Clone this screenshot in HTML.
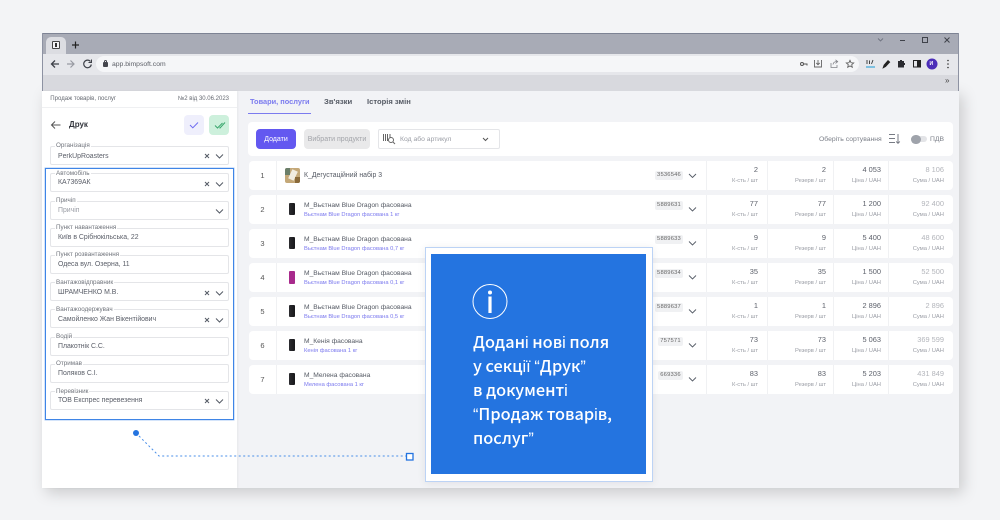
<!DOCTYPE html>
<html lang="uk"><head><meta charset="utf-8"><title>BimpSoft</title>
<style>
html,body{margin:0;padding:0}
body{width:1000px;height:520px;position:relative;overflow:hidden;background:#f3f4f6;font-family:"Liberation Sans",sans-serif;color:#4b4f5a}
div,span,svg{position:absolute;box-sizing:border-box}
.t{white-space:nowrap;line-height:10px;height:10px;filter:blur(.25px)}
.fld{left:50px;width:179px;height:19px;border:1px solid #e4e5e8;border-radius:2px;background:#fff}
.lbl{left:55px;font-size:6.3px;color:#70747c;background:#fff;padding:0 1px;white-space:nowrap;line-height:7px;height:7px;filter:blur(.25px)}
.val{left:58px;font-size:6.9px;color:#5a5e68;white-space:nowrap;line-height:10px;height:10px;filter:blur(.25px)}
.row{left:249px;width:704px;height:29px;background:#fff;border-radius:4px}
.dv{top:0;width:1px;height:29px;background:#f0f1f3}
.n{left:0;width:27px;top:9.500px;text-align:center;font-size:7.500px;color:#555;line-height:10px;filter:blur(.25px)}
.name{left:55px;top:6px;font-size:6.700px;color:#555a64;white-space:nowrap;line-height:9px;filter:blur(.25px)}
.sub{left:55px;top:15.500px;font-size:5.750px;color:#7a78ee;white-space:nowrap;line-height:8px;filter:blur(.25px)}
.chip{left:406px;top:6px;height:9px;width:28px;background:#f0f1f3;border-radius:2px;font-size:5.800px;color:#666;text-align:center;line-height:9.500px;letter-spacing:.2px;filter:blur(.2px)}
.v{text-align:right;width:60px;font-size:7.400px;color:#5d616b;top:4px;line-height:9px;filter:blur(.25px)}
.c{text-align:right;width:60px;font-size:5.800px;color:#9a9da5;top:16px;line-height:8px;filter:blur(.25px)}
.g{color:#b3b5bb}
.bag{left:40px;top:8px;width:6px;height:12px;background:linear-gradient(90deg,#2c2c30,#17171a);border-radius:1px}
.pop{font-family:"Noto Sans CJK SC","Liberation Sans",sans-serif;font-size:16.300px;font-weight:500;color:#fff;left:473px;white-space:nowrap;line-height:24px;height:24px}
.pop i{font-family:"Liberation Sans",sans-serif;font-style:normal}
</style></head><body>
<!-- window -->
<div style="left:42px;top:90px;width:917px;height:398px;background:#f2f3f6;box-shadow:4px 5px 14px rgba(0,0,0,.17)"></div>
<div style="left:42px;top:33px;width:917px;height:21px;background:#a8abb6;border-top:1px solid #7d8394"></div>
<div style="left:42px;top:54px;width:917px;height:21px;background:#e6e7eb"></div>
<div style="left:42px;top:75px;width:917px;height:16px;background:#d8d9de"></div>
<div style="left:958px;top:33px;width:1px;height:58px;background:#8d92a2"></div>
<div style="left:42px;top:33px;width:1px;height:58px;background:#8d92a2"></div>
<div style="left:46px;top:37px;width:20px;height:17px;background:#dcdde2;border-radius:5px 5px 0 0"></div>
<div style="left:52px;top:41px;width:8px;height:8px;background:#f4f4f6;border:1px solid #444;border-radius:1px"></div>
<div style="left:55px;top:43px;width:2px;height:4px;background:#333"></div>
<div style="left:96px;top:56px;width:763px;height:16px;background:#f5f6f8;border-radius:8px"></div>
<svg style="left:42px;top:33px" width="917" height="58" viewBox="42 33 917 58" fill="none" stroke="#3f424a" stroke-width="1.100">
<path d="M72 45h7M75.500 41.500v7" stroke="#222" stroke-width="1.200"/>
<path d="M59 64h-7M55 60.500L51.500 64l3.500 3.500" stroke-width="1.300"/>
<path d="M67 64h7M70.500 60.500L74 64l-3.500 3.500" stroke="#989aa2" stroke-width="1.200"/>
<path d="M90.500 61.500a3.800 3.800 0 1 0 .8 3" stroke-width="1.200"/><path d="M91.500 59.500v3h-3" stroke-width="1"/>
<path d="M878 38.500l2.500 2.500 2.500-2.500" stroke="#6f7380" stroke-width=".9"/>
<path d="M900 40.500h5" stroke-width="1"/>
<rect x="922.500" y="37.500" width="5" height="5" stroke-width="1"/>
<path d="M944.500 37.500l5 5M949.500 37.500l-5 5" stroke-width="1"/>
<path d="M800.500 64a1.500 1.500 0 1 0 3 0a1.500 1.500 0 1 0-3 0M803.500 64h3.500v1.500" stroke="#555" stroke-width="1"/>
<path d="M815 60.500h-.5v6.500h7v-6.500h-.5M818 60v4.500M816.300 63l1.700 1.700 1.700-1.700" stroke="#666" stroke-width=".9"/>
<path d="M831 63v4.500h6V65M833 64.500c.3-2 1.700-3 4-3M835.500 59.800l2.200 1.800-2.200 1.800" stroke="#808288" stroke-width=".8"/>
<path d="M850 60.300l1.100 2.500 2.600.2-2 1.700.6 2.600-2.300-1.400-2.300 1.400.6-2.600-2-1.700 2.600-.2z" stroke="#555" stroke-width=".8"/>
<path d="M867 60v4M869.500 60.500v3.500M873 60l-1.500 4" stroke="#333" stroke-width=".9"/><path d="M866 67h9" stroke="#2a9fd6" stroke-width="1.100"/>
<path d="M883 68l1-3 4-4.500 1.800 1.600-4.200 4.500z" fill="#222" stroke="#222" stroke-width=".7"/>
<path d="M898 61h2v-1h2v1h2v2h1v2h-1v2.500h-6z" fill="#2a2b30" stroke="none"/>
<rect x="913.500" y="60.500" width="7" height="6.500" stroke="#222" stroke-width="1"/><rect x="917" y="60.500" width="3.500" height="6.500" fill="#222" stroke="none"/>
<circle cx="932" cy="64" r="5.500" fill="#4b2db8" stroke="none"/>
<circle cx="948" cy="60.500" r=".8" fill="#333" stroke="none"/><circle cx="948" cy="64" r=".8" fill="#333" stroke="none"/><circle cx="948" cy="67.500" r=".8" fill="#333" stroke="none"/>
</svg>
<div style="left:103px;top:62px;width:4.500px;height:4.500px;background:#44464d;border-radius:1px"></div>
<div style="left:104px;top:60px;width:2.500px;height:3px;border:1px solid #44464d;border-bottom:0;border-radius:2px 2px 0 0"></div>
<div class="t" style="left:112px;top:59.500px;font-size:6.800px;color:#5b5e66">app.bimpsoft.com</div>
<div class="t" style="left:929.500px;top:59px;font-size:5px;color:#fff;font-weight:bold">И</div>
<div class="t" style="left:945px;top:76px;font-size:8px;color:#444">»</div>

<!-- left panel -->
<div style="left:42px;top:91px;width:195px;height:397px;background:#fff;box-shadow:1px 0 2px rgba(0,0,0,.05)"></div>
<div style="left:42px;top:107px;width:195px;height:1px;background:#eff0f2"></div>
<div class="t" style="left:50px;top:94px;font-size:6.050px;color:#666a72;padding-left:.3px;filter:none">Продаж товарів, послуг</div>
<div class="t" style="right:771px;top:94px;font-size:6px;color:#666a72">№2 від 30.06.2023</div>
<svg style="left:50px;top:119px" width="12" height="12" viewBox="0 0 12 12" fill="none" stroke="#555" stroke-width="1"><path d="M10.500 6H1.500M5 2.500L1.500 6 5 9.500"/></svg>
<div class="t" style="left:69px;top:120px;font-size:8px;font-weight:bold;color:#33363d">Друк</div>
<div style="left:184px;top:115px;width:20px;height:20px;background:#efeffc;border-radius:4px"></div>
<div style="left:209px;top:115px;width:20px;height:20px;background:#cdf0dc;border-radius:4px"></div>
<svg style="left:184px;top:115px" width="46" height="20" viewBox="0 0 46 20" fill="none"><path d="M6 10l2.800 2.800L14 7.500" stroke="#6f6cf0"/><path d="M31 10.500l2.500 2.500 5-5M35.500 12.500l.5.500 5-5.500" stroke="#3aa76d"/></svg>

<div class="fld" style="top:146px"></div><div class="lbl" style="top:142px">Організація</div><div class="val" style="top:151.500px">PerkUpRoasters</div>
<div style="left:45px;top:168px;width:189px;height:252px;border:1.500px solid #3f85e6;box-shadow:0 0 0 .5px #a9c9f5"></div>
<div class="fld" style="top:173px"></div><div class="lbl" style="top:170px">Автомобіль</div><div class="val" style="top:178px">КА7369АК</div>
<div class="fld" style="top:201px"></div><div class="lbl" style="top:197px">Причіп</div><div class="val" style="top:206px;color:#9a9da5">Причіп</div>
<div class="fld" style="top:228px"></div><div class="lbl" style="top:224px">Пункт навантаження</div><div class="val" style="top:233px">Київ в Срібнокільська, 22</div>
<div class="fld" style="top:255px"></div><div class="lbl" style="top:251px">Пункт розвантаження</div><div class="val" style="top:260px">Одеса вул. Озерна, 11</div>
<div class="fld" style="top:282px"></div><div class="lbl" style="top:279px">Вантажовідправник</div><div class="val" style="top:288px">ШРАМЧЕНКО М.В.</div>
<div class="fld" style="top:309px"></div><div class="lbl" style="top:306px">Вантажоодержувач</div><div class="val" style="top:315px">Самойленко Жан Вікентійович</div>
<div class="fld" style="top:337px"></div><div class="lbl" style="top:333px">Водій</div><div class="val" style="top:342px">Плакотнік С.С.</div>
<div class="fld" style="top:364px"></div><div class="lbl" style="top:360px">Отримав</div><div class="val" style="top:369px">Поляков С.І.</div>
<div class="fld" style="top:391px"></div><div class="lbl" style="top:388px">Перевізник</div><div class="val" style="top:396px">ТОВ Експрес перевезення</div>
<svg style="left:200px;top:146px" width="30" height="270" viewBox="200 146 30 270" fill="none" stroke="#555b66" stroke-width="1">
<path d="M205 154l4 4M209 154l-4 4M216 154.500l3.500 3.500 3.500-3.500"/>
<path d="M205 182l4 4M209 182l-4 4M216 182.500l3.500 3.500 3.500-3.500"/>
<path d="M216 209.500l3.500 3.500 3.500-3.500"/>
<path d="M205 291l4 4M209 291l-4 4M216 291.500l3.500 3.500 3.500-3.500"/>
<path d="M205 318l4 4M209 318l-4 4M216 318.500l3.500 3.500 3.500-3.500"/>
<path d="M205 399l4 4M209 399l-4 4M216 399.500l3.500 3.500 3.500-3.500"/>
</svg>

<!-- right panel -->
<div class="t" style="left:250px;top:97px;font-size:7.400px;font-weight:bold;color:#7b7bef">Товари, послуги</div>
<div class="t" style="left:324px;top:97px;font-size:7.700px;font-weight:bold;color:#555a64">Зв'язки</div>
<div class="t" style="left:367px;top:97px;font-size:7.600px;font-weight:bold;color:#555a64">Історія змін</div>
<div style="left:248px;top:113px;width:63px;height:1px;background:#7b7bef"></div>
<div style="left:248px;top:122px;width:705px;height:34px;background:#fff;border-radius:4px"></div>
<div style="left:256px;top:129px;width:40px;height:20px;background:#6358f0;border-radius:4px;color:#fff;font-size:7px;text-align:center;line-height:22px">Додати</div>
<div style="left:304px;top:129px;width:66px;height:20px;background:#e9e9ea;border-radius:4px;color:#a2a4a9;font-size:7px;text-align:center;line-height:22px">Вибрати продукти</div>
<div style="left:378px;top:129px;width:122px;height:20px;background:#fff;border:1px solid #e4e5e8;border-radius:2px"></div>
<svg style="left:382px;top:132px" width="116" height="14" viewBox="382 132 116 14" fill="none" stroke="#666" stroke-width="1"><path d="M383.500 134v7M385.500 134v7M387.500 134v7M390 134v4"/><circle cx="391" cy="140" r="2.500"/><path d="M393 142l2 2"/><path d="M483 138l2.500 2.500 2.500-2.500" stroke="#555"/></svg>
<div class="t" style="left:400px;top:135px;font-size:6.800px;color:#9a9da5">Код або артикул</div>
<div class="t" style="left:819px;top:134.500px;font-size:6.800px;color:#7b7f88">Оберіть сортування</div>
<svg style="left:888px;top:133px" width="14" height="12" viewBox="0 0 14 12" fill="none" stroke="#777b84"><path d="M1 1.500h6M1 5.500h6M1 9.500h6M10 1v9M8.200 8.500l1.800 1.800 1.800-1.800"/></svg>
<div style="left:911px;top:136px;width:16px;height:6px;background:#e3e4e7;border-radius:3px"></div>
<div style="left:911px;top:134.500px;width:10px;height:9px;background:#9fa3ab;border-radius:5px"></div>
<div class="t" style="left:930px;top:134.500px;font-size:6.800px;color:#7b7f88">ПДВ</div>

<!-- rows -->
<div class="row" style="top:161px"><div class="dv" style="left:27px"></div><div class="dv" style="left:457px"></div><div class="dv" style="left:518px"></div><div class="dv" style="left:584px"></div><div class="dv" style="left:639px"></div>
<div class="n">1</div><div style="left:36px;top:7px;width:15px;height:15px;background:#c4a878;border-radius:2px;overflow:hidden"><div style="left:5px;top:2px;width:6px;height:10px;background:#f1ece0;transform:rotate(25deg)"></div><div style="left:0;top:0;width:5px;height:7px;background:#6b7f6a"></div><div style="left:10px;top:9px;width:5px;height:6px;background:#8a6a3a"></div></div>
<div class="name" style="top:9.500px;font-size:6.900px">К_Дегустаційний набір 3</div><div class="chip" style="top:10px">3536546</div>
<div class="v" style="left:449px">2</div><div class="c" style="left:449px">К-сть / шт</div><div class="v" style="left:517px">2</div><div class="c" style="left:517px">Резерв / шт</div><div class="v" style="left:572px">4 053</div><div class="c" style="left:572px">Ціна / UAH</div><div class="v g" style="left:635px">8 106</div><div class="c" style="left:635px">Сума / UAH</div></div>

<div class="row" style="top:195px"><div class="dv" style="left:27px"></div><div class="dv" style="left:457px"></div><div class="dv" style="left:518px"></div><div class="dv" style="left:584px"></div><div class="dv" style="left:639px"></div>
<div class="n">2</div><div class="bag"></div>
<div class="name">М_Вьєтнам Blue Dragon фасована</div><div class="sub">Вьєтнам Blue Dragon фасована 1 кг</div><div class="chip">5889631</div>
<div class="v" style="left:449px">77</div><div class="c" style="left:449px">К-сть / шт</div><div class="v" style="left:517px">77</div><div class="c" style="left:517px">Резерв / шт</div><div class="v" style="left:572px">1 200</div><div class="c" style="left:572px">Ціна / UAH</div><div class="v g" style="left:635px">92 400</div><div class="c" style="left:635px">Сума / UAH</div></div>

<div class="row" style="top:229px"><div class="dv" style="left:27px"></div><div class="dv" style="left:457px"></div><div class="dv" style="left:518px"></div><div class="dv" style="left:584px"></div><div class="dv" style="left:639px"></div>
<div class="n">3</div><div class="bag"></div>
<div class="name">М_Вьєтнам Blue Dragon фасована</div><div class="sub">Вьєтнам Blue Dragon фасована 0,7 кг</div><div class="chip">5889633</div>
<div class="v" style="left:449px">9</div><div class="c" style="left:449px">К-сть / шт</div><div class="v" style="left:517px">9</div><div class="c" style="left:517px">Резерв / шт</div><div class="v" style="left:572px">5 400</div><div class="c" style="left:572px">Ціна / UAH</div><div class="v g" style="left:635px">48 600</div><div class="c" style="left:635px">Сума / UAH</div></div>

<div class="row" style="top:263px"><div class="dv" style="left:27px"></div><div class="dv" style="left:457px"></div><div class="dv" style="left:518px"></div><div class="dv" style="left:584px"></div><div class="dv" style="left:639px"></div>
<div class="n">4</div><div style="left:40px;top:8px;width:6px;height:13px;background:#a82a8c;border-radius:1px"></div>
<div class="name">М_Вьєтнам Blue Dragon фасована</div><div class="sub">Вьєтнам Blue Dragon фасована 0,1 кг</div><div class="chip">5889634</div>
<div class="v" style="left:449px">35</div><div class="c" style="left:449px">К-сть / шт</div><div class="v" style="left:517px">35</div><div class="c" style="left:517px">Резерв / шт</div><div class="v" style="left:572px">1 500</div><div class="c" style="left:572px">Ціна / UAH</div><div class="v g" style="left:635px">52 500</div><div class="c" style="left:635px">Сума / UAH</div></div>

<div class="row" style="top:297px"><div class="dv" style="left:27px"></div><div class="dv" style="left:457px"></div><div class="dv" style="left:518px"></div><div class="dv" style="left:584px"></div><div class="dv" style="left:639px"></div>
<div class="n">5</div><div class="bag"></div>
<div class="name">М_Вьєтнам Blue Dragon фасована</div><div class="sub">Вьєтнам Blue Dragon фасована 0,5 кг</div><div class="chip">5889637</div>
<div class="v" style="left:449px">1</div><div class="c" style="left:449px">К-сть / шт</div><div class="v" style="left:517px">1</div><div class="c" style="left:517px">Резерв / шт</div><div class="v" style="left:572px">2 896</div><div class="c" style="left:572px">Ціна / UAH</div><div class="v g" style="left:635px">2 896</div><div class="c" style="left:635px">Сума / UAH</div></div>

<div class="row" style="top:331px"><div class="dv" style="left:27px"></div><div class="dv" style="left:457px"></div><div class="dv" style="left:518px"></div><div class="dv" style="left:584px"></div><div class="dv" style="left:639px"></div>
<div class="n">6</div><div class="bag"></div>
<div class="name">М_Кенія фасована</div><div class="sub">Кенія фасована 1 кг</div><div class="chip" style="left:409px;width:25px">757571</div>
<div class="v" style="left:449px">73</div><div class="c" style="left:449px">К-сть / шт</div><div class="v" style="left:517px">73</div><div class="c" style="left:517px">Резерв / шт</div><div class="v" style="left:572px">5 063</div><div class="c" style="left:572px">Ціна / UAH</div><div class="v g" style="left:635px">369 599</div><div class="c" style="left:635px">Сума / UAH</div></div>

<div class="row" style="top:365px"><div class="dv" style="left:27px"></div><div class="dv" style="left:457px"></div><div class="dv" style="left:518px"></div><div class="dv" style="left:584px"></div><div class="dv" style="left:639px"></div>
<div class="n">7</div><div class="bag"></div>
<div class="name">М_Мелена фасована</div><div class="sub">Мелена фасована 1 кг</div><div class="chip" style="left:409px;width:25px">669336</div>
<div class="v" style="left:449px">83</div><div class="c" style="left:449px">К-сть / шт</div><div class="v" style="left:517px">83</div><div class="c" style="left:517px">Резерв / шт</div><div class="v" style="left:572px">5 203</div><div class="c" style="left:572px">Ціна / UAH</div><div class="v g" style="left:635px">431 849</div><div class="c" style="left:635px">Сума / UAH</div></div>

<svg style="left:680px;top:165px" width="24" height="225" viewBox="680 165 24 225" fill="none" stroke="#555b66" stroke-width=".9">
<path d="M689 174l3.500 3.500 3.500-3.500M689 207.500l3.500 3.500 3.500-3.500M689 241.500l3.500 3.500 3.500-3.500M689 275.500l3.500 3.500 3.500-3.500M689 309.500l3.500 3.500 3.500-3.500M689 343.500l3.500 3.500 3.500-3.500M689 377.500l3.500 3.500 3.500-3.500"/>
</svg>

<!-- popup -->
<div style="left:425px;top:247px;width:228px;height:235px;background:#fff;border:1px solid #bcd3f5;box-shadow:0 1px 8px rgba(0,0,0,.08)"></div>
<div style="left:431px;top:254px;width:215px;height:220px;background:#2474e0"></div>
<svg style="left:472px;top:283px" width="36" height="37" viewBox="0 0 36 37" fill="none" stroke="#fff"><circle cx="18" cy="18.500" r="17"/><circle cx="18" cy="9.500" r="2" fill="#fff" stroke="none"/><rect x="16.400" y="13.500" width="3.200" height="16.500" fill="#fff" stroke="none"/></svg>
<div class="pop" style="top:329px">Додані нові поля</div>
<div class="pop" style="top:353px">у секції <i>“</i>Друк<i>”</i></div>
<div class="pop" style="top:377px">в документі</div>
<div class="pop" style="top:401px"><i>“</i>Продаж товарів,</div>
<div class="pop" style="top:425px">послуг<i>”</i></div>

<!-- connector -->
<svg style="left:125px;top:425px" width="295" height="45" viewBox="125 425 295 45" fill="none">
<circle cx="136" cy="433" r="3" fill="#2474e0"/>
<path d="M139 436l20 20H406" stroke="#4a8fe8" stroke-width="1" stroke-dasharray="2 2.500"/>
<rect x="406.500" y="453.500" width="6.500" height="6.500" fill="#fff" stroke="#2474e0" stroke-width="1.300"/>
</svg>
</body></html>
